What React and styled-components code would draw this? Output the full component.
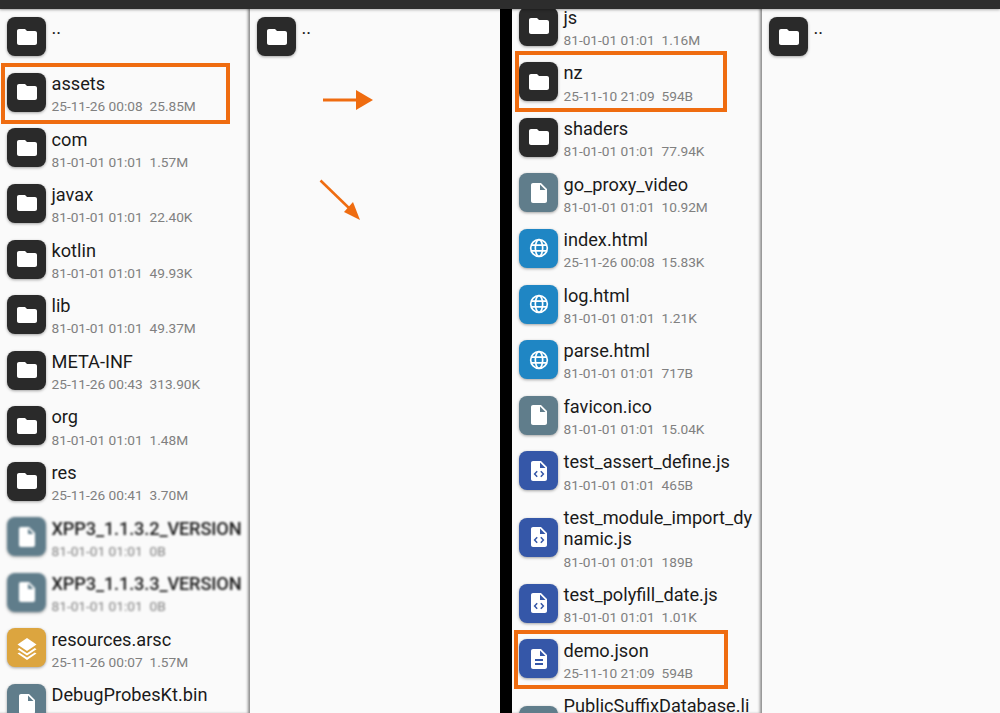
import React from 'react';
import styled, { createGlobalStyle } from 'styled-components';

const GlobalStyle = createGlobalStyle`
  html, body {
    margin: 0;
    padding: 0;
    height: 100%;
    overflow: hidden;
    background: #fafafa;
    font-family: Roboto, "Liberation Sans", sans-serif;
  }
`;

const ICON_COLORS = {
  folder: '#2a2a2a',
  file: '#607d8b',
  web: '#1f86c4',
  code: '#3557a8',
  doc: '#3557a8',
  res: '#dca53f',
};

const Shape = ({ type }) => {
  if (type === 'folder') {
    return <path fill="#fff" d="M10 4H4c-1.1 0-2 .9-2 2v12c0 1.1.9 2 2 2h16c1.1 0 2-.9 2-2V8c0-1.1-.9-2-2-2h-8l-2-2z" />;
  }
  if (type === 'file') {
    return <path fill="#fff" d="M6 2c-1.1 0-1.99.9-1.99 2L4 20c0 1.1.89 2 1.99 2H18c1.1 0 2-.9 2-2V8l-6-6H6zm7 7V3.5L18.5 9H13z" />;
  }
  if (type === 'web') {
    return (
      <g fill="none" stroke="#fff" strokeWidth="2">
        <circle cx="12" cy="12" r="10" />
        <ellipse cx="12" cy="12" rx="4.4" ry="10" />
        <path d="M2.6 8.6h18.8M2.6 15.4h18.8" />
      </g>
    );
  }
  if (type === 'code') {
    return (
      <>
        <path fill="#fff" d="M6 2c-1.1 0-1.99.9-1.99 2L4 20c0 1.1.89 2 1.99 2H18c1.1 0 2-.9 2-2V8l-6-6H6zm7 7V3.5L18.5 9H13z" />
        <path fill="none" stroke="#3557a8" strokeWidth="1.5" d="M10.2 12.2 7.6 15l2.6 2.8M13.8 12.2l2.6 2.8-2.6 2.8" />
      </>
    );
  }
  if (type === 'doc') {
    return <path fill="#fff" d="M14 2H6c-1.1 0-1.99.9-1.99 2L4 20c0 1.1.89 2 1.99 2H18c1.1 0 2-.9 2-2V8l-6-6zm2 16H8v-2h8v2zm0-4H8v-2h8v2zm-3-5V3.5L18.5 9H13z" />;
  }
  return (
    <g fill="#fff">
      <path d="M12 2 2.5 8.5 12 15l9.5-6.5z" />
      <path d="M4.2 12 2.5 13.2 12 19.6l9.5-6.4-1.7-1.2L12 17.2z" />
      <path d="M4.2 16.4 2.5 17.6 12 24l9.5-6.4-1.7-1.2L12 21.6z" />
    </g>
  );
};

const Page = styled.div`
  display: flex;
  flex-direction: column;
  width: 1000px;
  height: 713px;
  overflow: hidden;
`;

const TopBar = styled.div`
  flex: none;
  height: 9px;
  background: #2d2d2d;
  position: relative;
  z-index: 2;
  box-shadow: 0 1px 3px rgba(0, 0, 0, 0.3);
`;

const Columns = styled.div`
  flex: 1;
  display: flex;
  min-height: 0;
`;

const Panel = styled.div`
  position: relative;
  flex: none;
  width: ${(p) => p.$width}px;
  background: #fafafa;
  overflow: hidden;
  box-sizing: border-box;
  box-shadow: ${(p) => (p.$edge ? 'inset -3px 0 3px -1px rgba(0, 0, 0, 0.45)' : 'none')};
`;

const Gutter = styled.div`
  flex: none;
  width: 12px;
  background: #000;
`;

const List = styled.div`
  display: flex;
  flex-direction: column;
  margin-top: ${(p) => p.$offset || 0}px;
`;

const Row = styled.div`
  position: relative;
  display: flex;
  align-items: center;
  gap: 5.5px;
  padding: 4.95px 0 4.95px 7px;
`;

const IconBox = styled.div`
  flex: none;
  display: flex;
  align-items: center;
  justify-content: center;
  width: 39px;
  height: 39px;
  border-radius: 8px;
  background: ${(p) => ICON_COLORS[p.$type]};
  box-shadow: 0 1px 3px rgba(0, 0, 0, 0.35);
  filter: ${(p) => (p.$blur ? 'blur(1.2px)' : 'none')};

  svg {
    width: ${(p) => (p.$type === 'web' ? 20 : 24)}px;
    height: ${(p) => (p.$type === 'web' ? 20 : 24)}px;
  }
`;

const Texts = styled.div`
  min-width: 0;
  width: 192px;
  padding-top: 3.5px;
  filter: ${(p) => (p.$blur ? 'blur(1.2px)' : 'none')};
`;

const Name = styled.div`
  font-size: 18.2px;
  line-height: 21.5px;
  color: #1a1a1a;
  white-space: pre-wrap;
  font-weight: ${(p) => (p.$blur ? 500 : 400)};
  letter-spacing: ${(p) => (p.$blur ? '-0.15px' : '0')};
`;

const Meta = styled.div`
  margin-top: 2.7px;
  min-height: 18px;
  font-size: 13.7px;
  line-height: 18px;
  color: #808080;
  white-space: pre;
`;

const Mark = styled.div`
  position: absolute;
  left: ${(p) => p.$left}px;
  top: ${(p) => p.$top}px;
  width: ${(p) => p.$width}px;
  height: ${(p) => p.$height}px;
  border: 4px solid #ef6c10;
  box-sizing: border-box;
  pointer-events: none;
`;

const ArrowLayer = styled.svg`
  position: absolute;
  left: 0;
  top: 0;
  width: 250px;
  height: 704px;
  pointer-events: none;
`;

const FileRow = ({ type, name, meta, blur, mark }) => (
  <Row>
    <IconBox $type={type} $blur={blur}>
      <svg viewBox="0 0 24 24"><Shape type={type} /></svg>
    </IconBox>
    <Texts $blur={blur}>
      <Name $blur={blur}>{name}</Name>
      <Meta>{meta}</Meta>
    </Texts>
    {mark && <Mark {...mark} />}
  </Row>
);

const left = [
  { type: 'folder', name: '..' },
  { type: 'folder', name: 'assets', meta: '25-11-26 00:08  25.85M', mark: { $left: 1, $top: -1.6, $width: 229, $height: 61 } },
  { type: 'folder', name: 'com', meta: '81-01-01 01:01  1.57M' },
  { type: 'folder', name: 'javax', meta: '81-01-01 01:01  22.40K' },
  { type: 'folder', name: 'kotlin', meta: '81-01-01 01:01  49.93K' },
  { type: 'folder', name: 'lib', meta: '81-01-01 01:01  49.37M' },
  { type: 'folder', name: 'META-INF', meta: '25-11-26 00:43  313.90K' },
  { type: 'folder', name: 'org', meta: '81-01-01 01:01  1.48M' },
  { type: 'folder', name: 'res', meta: '25-11-26 00:41  3.70M' },
  { type: 'file', name: 'XPP3_1.1.3.2_VERSION', meta: '81-01-01 01:01  0B', blur: true },
  { type: 'file', name: 'XPP3_1.1.3.3_VERSION', meta: '81-01-01 01:01  0B', blur: true },
  { type: 'res', name: 'resources.arsc', meta: '25-11-26 00:07  1.57M' },
  { type: 'file', name: 'DebugProbesKt.bin', meta: '81-01-01 01:01  1.73K' },
];

const right = [
  { type: 'folder', name: 'js', meta: '81-01-01 01:01  1.16M' },
  { type: 'folder', name: 'nz', meta: '25-11-10 21:09  594B', mark: { $left: 3, $top: -3, $width: 212, $height: 61 } },
  { type: 'folder', name: 'shaders', meta: '81-01-01 01:01  77.94K' },
  { type: 'file', name: 'go_proxy_video', meta: '81-01-01 01:01  10.92M' },
  { type: 'web', name: 'index.html', meta: '25-11-26 00:08  15.83K' },
  { type: 'web', name: 'log.html', meta: '81-01-01 01:01  1.21K' },
  { type: 'web', name: 'parse.html', meta: '81-01-01 01:01  717B' },
  { type: 'file', name: 'favicon.ico', meta: '81-01-01 01:01  15.04K' },
  { type: 'code', name: 'test_assert_define.js', meta: '81-01-01 01:01  465B' },
  { type: 'code', name: 'test_module_import_dy\nnamic.js', meta: '81-01-01 01:01  189B' },
  { type: 'code', name: 'test_polyfill_date.js', meta: '81-01-01 01:01  1.01K' },
  { type: 'doc', name: 'demo.json', meta: '25-11-10 21:09  594B', mark: { $left: 2, $top: -1, $width: 214, $height: 59 } },
  { type: 'file', name: 'PublicSuffixDatabase.li\nst', meta: '81-01-01 01:01  98.00K' },
];

const App = () => (
  <Page>
    <GlobalStyle />
    <TopBar />
    <Columns>
      <Panel $width={250} $edge>
        <List>
          {left.map((f) => <FileRow key={f.name} {...f} />)}
        </List>
      </Panel>
      <Panel $width={250}>
        <List>
          <FileRow type="folder" name=".." />
        </List>
        <ArrowLayer viewBox="0 0 250 704">
          <g fill="#ef6c10" stroke="#ef6c10">
            <path d="M73 91h34" strokeWidth="3" fill="none" />
            <path d="M106 81l17 10-17 10z" stroke="none" />
            <path d="M70.5 171.5l30 29" strokeWidth="2.5" fill="none" />
            <path d="M110 211l-16-8 9-10z" stroke="none" />
          </g>
        </ArrowLayer>
      </Panel>
      <Gutter />
      <Panel $width={250} $edge>
        <List $offset={-10.6}>
          {right.map((f) => <FileRow key={f.name} {...f} />)}
        </List>
      </Panel>
      <Panel $width={238}>
        <List>
          <FileRow type="folder" name=".." />
        </List>
      </Panel>
    </Columns>
  </Page>
);

export default App;
